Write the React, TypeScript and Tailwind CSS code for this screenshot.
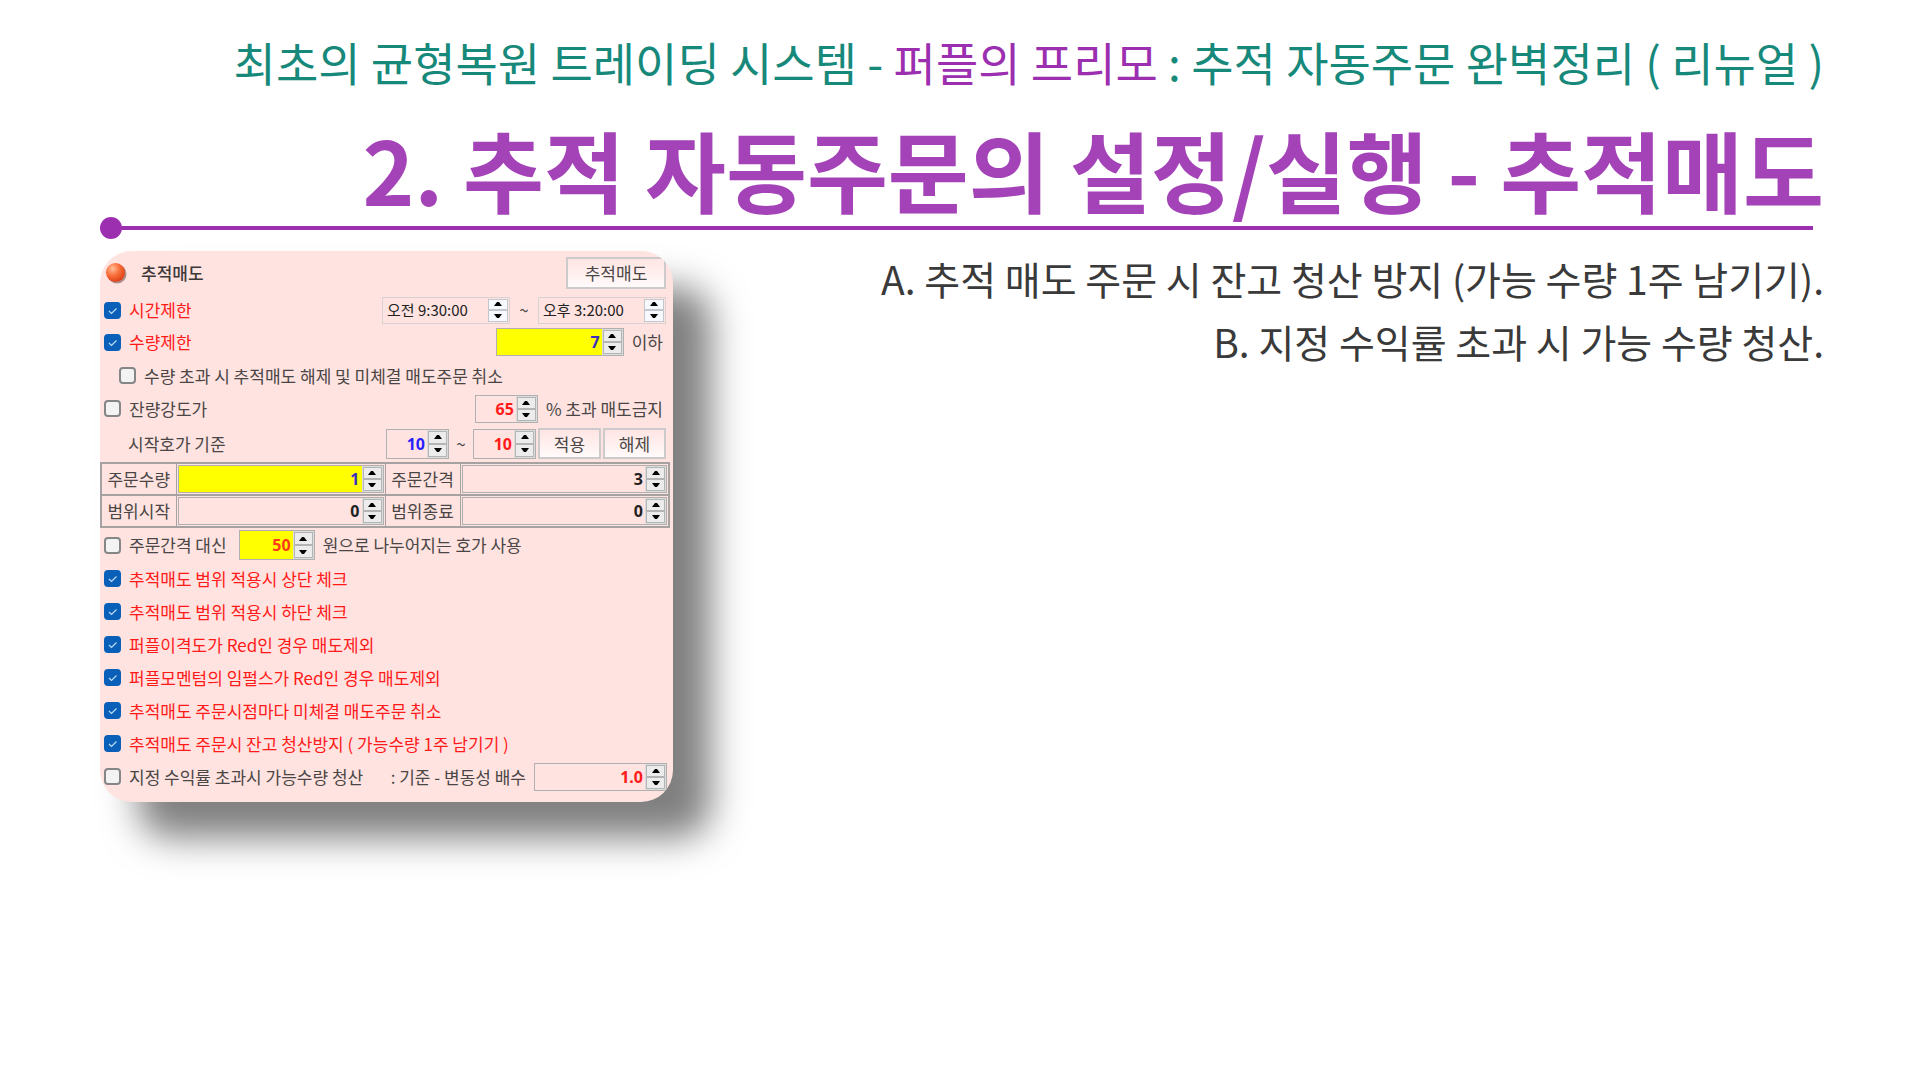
import { useId, useState } from 'react'
import type { ReactNode } from 'react'
import clsx from 'clsx'

function Arrow({ up = false }: { up?: boolean }) {
  return (
    <svg viewBox="0 0 8 4" className="w-2 h-1" aria-hidden="true">
      <path d={up ? 'M0 4 L3 0 H5 L8 4 Z' : 'M0 0 H8 L5 4 H3 Z'} fill="#000" />
    </svg>
  )
}

interface SpinnerProps {
  label: string
  value: string
  className?: string
  inputClassName?: string
  time?: boolean
}

// text box with the small up / down buttons on its right
function Spinner({ label, value, className, inputClassName, time = false }: SpinnerProps) {
  const [text, setText] = useState(value)
  const button = clsx(
    'flex flex-1 items-center justify-center border',
    time ? 'border-[#c4c8cc] bg-[#f6faff]' : 'border-[#b4b4b4] bg-[#ececec]'
  )

  const step = (by: number) => {
    if (time) return
    const digits = text.includes('.') ? 1 : 0
    setText((Number(text) + by * (digits ? 0.1 : 1)).toFixed(digits))
  }

  return (
    <div className={clsx('flex shrink-0 border', time ? 'border-[#d8d2d2]' : 'border-[#b0b0b0]', className)}>
      <input
        type="text"
        aria-label={label}
        value={text}
        onChange={(e) => setText(e.target.value)}
        className={clsx(
          'min-w-0 flex-1 bg-transparent outline-none',
          time ? 'pl-1 text-[15px] text-[#222]' : "pr-0.5 text-right text-[16px] font-bold font-['Noto_Sans',sans-serif]",
          inputClassName
        )}
      />
      <div className={clsx('flex flex-col shrink-0 p-px', time ? 'w-[22px]' : 'w-[21px] bg-[#dcdcdc]')}>
        <button type="button" aria-label={`${label} 증가`} className={button} onClick={() => step(1)}>
          <Arrow up />
        </button>
        <button type="button" aria-label={`${label} 감소`} className={button} onClick={() => step(-1)}>
          <Arrow />
        </button>
      </div>
    </div>
  )
}

function Check({ children, checked = false }: { children: ReactNode; checked?: boolean }) {
  const id = useId()

  return (
    <div className="flex items-center gap-2">
      <span className="grid shrink-0">
        <input
          id={id}
          type="checkbox"
          defaultChecked={checked}
          className="peer col-start-1 row-start-1 size-[17px] appearance-none rounded-sm border-2 border-[#868686] bg-[#f3f3f3] checked:border-[#0a5fb8] checked:bg-[#0a5fb8]"
        />
        <svg
          viewBox="0 0 17 17"
          className="pointer-events-none invisible col-start-1 row-start-1 size-[17px] peer-checked:visible"
          aria-hidden="true"
        >
          <path d="M5 9 L7.5 11.5 L12.5 6.5" fill="none" stroke="#b9dcf8" strokeWidth="1.2" />
        </svg>
      </span>
      <label htmlFor={id} className={clsx('whitespace-nowrap', checked && 'text-[#ff1a1a]')}>
        {children}
      </label>
    </div>
  )
}

function PanelButton({ children, className }: { children: ReactNode; className?: string }) {
  return (
    <button
      type="button"
      className={clsx('border-2 border-[#cccaca] bg-linear-to-b from-[#ffe5e3] to-[#fffafa]', className)}
    >
      {children}
    </button>
  )
}

const conditions = [
  '추적매도 범위 적용시 상단 체크',
  '추적매도 범위 적용시 하단 체크',
  '퍼플이격도가 Red인 경우 매도제외',
  '퍼플모멘텀의 임펄스가 Red인 경우 매도제외',
  '추적매도 주문시점마다 미체결 매도주문 취소',
  '추적매도 주문시 잔고 청산방지 ( 가능수량 1주 남기기 )',
]

const orderRows = [
  [
    { name: '주문수량', value: '1', box: 'bg-[#ffff00]', color: 'text-[#3a2fc0]' },
    { name: '주문간격', value: '3', box: '', color: 'text-[#222]' },
  ],
  [
    { name: '범위시작', value: '0', box: '', color: 'text-[#222]' },
    { name: '범위종료', value: '0', box: '', color: 'text-[#222]' },
  ],
]

function SettingsPanel() {
  return (
    <section className="w-full max-w-[573px] shrink-0 overflow-hidden rounded-[32px] bg-[#ffe3e0] pb-[9px] text-[17px] leading-6 text-[#4a4646] shadow-[38px_36px_36px_rgba(0,0,0,0.5)]">
      <div className="flex h-11 items-center justify-between pl-[5px] pr-[7px]">
        <div className="flex items-center gap-[14px]">
          <svg viewBox="0 0 22 22" className="size-[22px]" aria-hidden="true">
            <defs>
              <radialGradient id="ball" cx="0.35" cy="0.3" r="0.75">
                <stop offset="0" stopColor="#ffc09a" />
                <stop offset="0.45" stopColor="#fb7440" />
                <stop offset="1" stopColor="#dc3c12" />
              </radialGradient>
            </defs>
            <circle cx="12" cy="12" r="9.5" fill="#5a3a34" opacity="0.5" />
            <circle cx="10.5" cy="10.5" r="9.5" fill="url(#ball)" />
          </svg>
          <h2 className="font-medium text-[#3c3838]">추적매도</h2>
        </div>
        <PanelButton className="h-8 w-[100px]">추적매도</PanelButton>
      </div>

      <div className="flex h-[30px] items-center justify-between pl-1 pr-[7px]">
        <Check checked>시간제한</Check>
        <div className="flex items-center">
          <Spinner time label="시작 시간" value="오전 9:30:00" className="h-[27px] w-32" />
          <span className="w-7 text-center">~</span>
          <Spinner time label="종료 시간" value="오후 3:20:00" className="h-[27px] w-32" />
        </div>
      </div>

      <div className="flex h-[34px] items-center justify-between pl-1 pr-[10px]">
        <Check checked>수량제한</Check>
        <div className="flex items-center gap-2">
          <Spinner label="제한 수량" value="7" className="h-7 w-32 bg-[#ffff00]" inputClassName="text-[#3a2fc0]" />
          <span>이하</span>
        </div>
      </div>

      <div className="flex h-[33px] items-center pl-[19px]">
        <Check>수량 초과 시 추적매도 해제 및 미체결 매도주문 취소</Check>
      </div>

      <div className="flex h-[33px] items-center justify-between pl-1 pr-[10px]">
        <Check>잔량강도가</Check>
        <div className="flex items-center gap-2">
          <Spinner label="잔량강도" value="65" className="h-7 w-[63px]" inputClassName="text-[#ff1a1a]" />
          <span>% 초과 매도금지</span>
        </div>
      </div>

      <div className="flex h-[37px] items-center justify-between pl-7 pr-[7px]">
        <span>시작호가 기준</span>
        <div className="flex items-center">
          <Spinner label="시작호가 하한" value="10" className="h-[30px] w-[63px]" inputClassName="text-[#2a20ff]" />
          <span className="w-6 text-center">~</span>
          <Spinner label="시작호가 상한" value="10" className="h-[30px] w-[63px]" inputClassName="text-[#ff1a1a]" />
          <PanelButton className="ml-0.5 h-[31px] w-[63px]">적용</PanelButton>
          <PanelButton className="ml-0.5 h-[31px] w-[63px]">해제</PanelButton>
        </div>
      </div>

      <div className="pr-[3px]">
        <table className="w-full table-fixed border-collapse border-2 border-[#a6a2a2]">
          <tbody>
            {orderRows.map((row, idx) => (
              <tr key={idx} className="border-b-2 border-[#a6a2a2]">
                {row.map((cell) => [
                  <th key={cell.name} scope="row" className="w-[75px] border-r border-[#a6a2a2] p-0 text-center font-normal">
                    {cell.name}
                  </th>,
                  <td key={`${cell.name}-value`} className="border-r border-[#a6a2a2] p-px">
                    <Spinner
                      label={cell.name}
                      value={cell.value}
                      className={clsx('h-7', cell.box)}
                      inputClassName={cell.color}
                    />
                  </td>,
                ])}
              </tr>
            ))}
          </tbody>
        </table>
      </div>

      <div className="flex h-[34px] items-center pl-1">
        <Check>주문간격 대신</Check>
        <Spinner label="호가 단위" value="50" className="ml-3 h-[30px] w-[76px] bg-[#ffff00]" inputClassName="text-[#ff3a1a]" />
        <span className="ml-2">원으로 나누어지는 호가 사용</span>
      </div>

      {conditions.map((text) => (
        <div key={text} className="flex h-[33px] items-center pl-1">
          <Check checked>{text}</Check>
        </div>
      ))}

      <div className="flex h-[33px] items-center justify-between pl-1 pr-[6px]">
        <Check>지정 수익률 초과시 가능수량 청산</Check>
        <div className="flex items-center gap-2">
          <span>: 기준 - 변동성 배수</span>
          <Spinner label="변동성 배수" value="1.0" className="h-7 w-[133px]" inputClassName="text-[#ff1a1a]" />
        </div>
      </div>
    </section>
  )
}

export default function App() {
  return (
    <main className="min-h-screen overflow-x-hidden bg-white pb-16 pl-[100px] pr-24 pt-7 font-['Noto_Sans_CJK_KR',sans-serif]">
      <header>
        <p className="text-right text-[46px] leading-[66px] text-[#17897b]">
          최초의 균형복원 트레이딩 시스템 - <span className="text-[#9c2fb0]">퍼플의 프리모</span> : 추적 자동주문
          완벽정리 ( 리뉴얼 )
        </p>
        <h1 className="mt-6 text-right text-[88px] font-bold leading-[99px] text-[#a443b7]">
          2. 추적 자동주문의 설정/실행 - 추적매도
        </h1>
        <div className="flex items-center pr-[11px]">
          <span className="size-[22px] rounded-full bg-[#9c2fb0]" />
          <span className="h-1 flex-1 bg-[#9c2fb0]" />
        </div>
      </header>

      <div className="mt-3 flex items-start justify-between gap-16">
        <SettingsPanel />
        <div className="-mt-1 text-right text-[39px] leading-[63px] text-[#3a3a3a]">
          <p>A. 추적 매도 주문 시 잔고 청산 방지 (가능 수량 1주 남기기).</p>
          <p>B. 지정 수익률 초과 시 가능 수량 청산.</p>
        </div>
      </div>
    </main>
  )
}
